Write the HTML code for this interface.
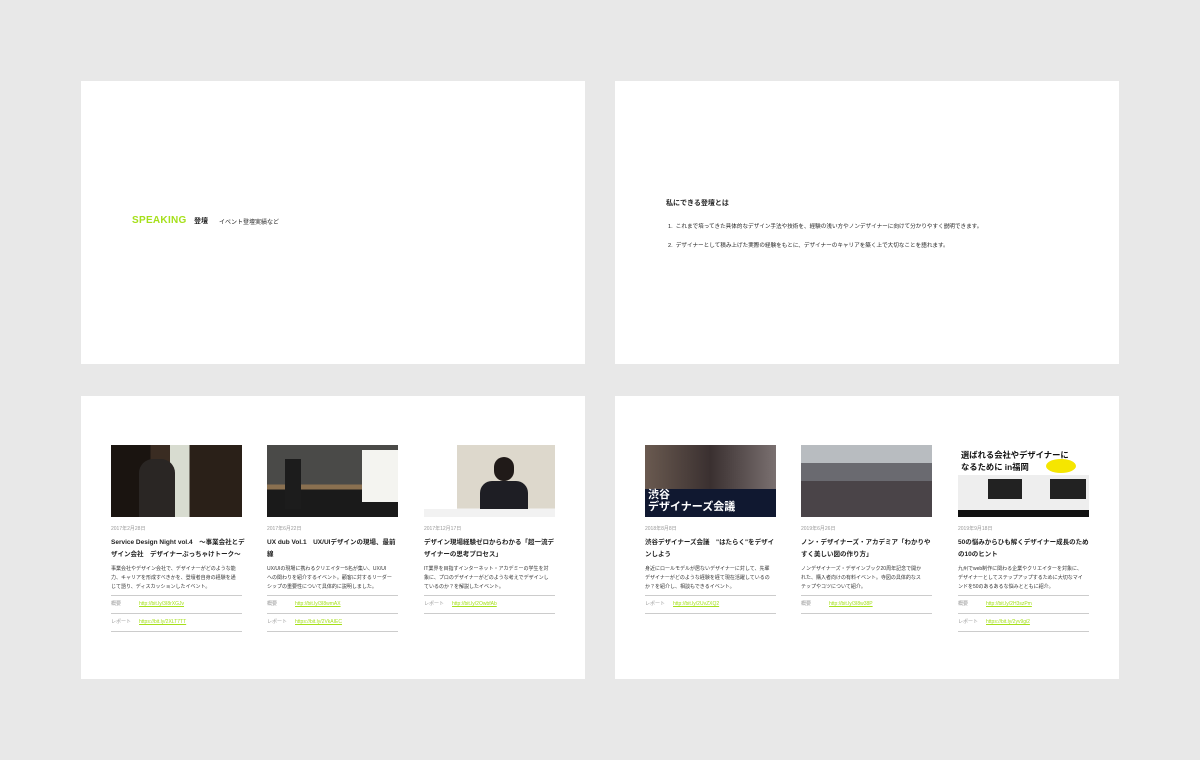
<!DOCTYPE html>
<html><head><meta charset="utf-8"><style>
*{margin:0;padding:0;box-sizing:border-box}
body{width:1200px;height:760px;background:#e8e8e8;position:relative;font-family:"Liberation Sans","Noto Sans CJK JP",sans-serif;color:#222;overflow:hidden}
.p{position:absolute;background:#fff;width:504px;height:283px}
.c{position:absolute;top:49px;width:131px}
.img{height:72px;width:131px;position:relative;overflow:hidden}
.d{margin-top:8px;font-size:5px;color:#999;height:8px}
.t{margin-top:4px;font-size:6.5px;font-weight:bold;line-height:12px;height:24px;color:#222;white-space:nowrap}
.ds{margin-top:4px;font-size:5px;line-height:9px;color:#333;height:27px;white-space:nowrap}
.rows{margin-top:3px;border-top:1px solid #ccc}
.r{height:18px;border-bottom:1px solid #ccc;font-size:5px;line-height:17px;color:#999;display:flex}
.r span:first-child{width:28px}
.r a{color:#a5e01a;text-decoration:underline}
</style></head><body>
<div class="p" style="left:81px;top:81px">
 <div style="position:absolute;left:51px;top:134px;font-size:10px;font-weight:bold;color:#a5e01a;letter-spacing:.3px">SPEAKING</div>
 <div style="position:absolute;left:113px;top:135px;font-size:7px;font-weight:bold">登壇</div>
 <div style="position:absolute;left:138px;top:136px;font-size:6px">イベント登壇実績など</div>
</div>
<div class="p" style="left:615px;top:81px">
 <div style="position:absolute;left:51px;top:117px;font-size:7px;font-weight:bold">私にできる登壇とは</div>
 <div style="position:absolute;left:53px;top:141px;font-size:5.6px">1.&nbsp; これまで培ってきた具体的なデザイン手法や技術を、経験の浅い方やノンデザイナーに向けて分かりやすく説明できます。</div>
 <div style="position:absolute;left:53px;top:160px;font-size:5.6px">2.&nbsp; デザイナーとして積み上げた実際の経験をもとに、デザイナーのキャリアを築く上で大切なことを語れます。</div>
</div>
<div class="p" style="left:81px;top:396px">
 <div class="c" style="left:30px">
  <div class="img" style="background:linear-gradient(90deg,#1a1410 0 30%,#3a2c22 30% 45%,#d8dcd0 45% 60%,#2a2018 60%)"><div style="position:absolute;left:28px;top:14px;width:36px;height:58px;background:#2a2624;border-radius:14px 14px 0 0"></div></div>
  <div class="d">2017年2月28日</div>
  <div class="t">Service Design Night vol.4　〜事業会社とデ<br>ザイン会社　デザイナーぶっちゃけトーク〜</div>
  <div class="ds">事業会社やデザイン会社で、デザイナーがどのような能<br>力、キャリアを形成すべきかを、登壇者自身の経験を通<br>じて語り、ディスカッションしたイベント。</div>
  <div class="rows"><div class="r"><span>概要</span><a>http://bit.ly/3I8rXGJv</a></div><div class="r"><span>レポート</span><a>https://bit.ly/2XLT7TT</a></div></div>
 </div>
 <div class="c" style="left:186px">
  <div class="img" style="background:linear-gradient(180deg,#4a4a48 0 55%,#8a7050 55% 62%,#1a1a1a 62%)"><div style="position:absolute;right:0;top:5px;width:36px;height:52px;background:#f4f4f0"></div><div style="position:absolute;left:18px;top:14px;width:16px;height:50px;background:#1c1c1c"></div></div>
  <div class="d">2017年6月22日</div>
  <div class="t">UX dub Vol.1　UX/UIデザインの現場、最前<br>線</div>
  <div class="ds">UX/UIの現場に携わるクリエイター5名が集い、UX/UI<br>への関わりを紹介するイベント。顧客に対するリーダー<br>シップの重要性について具体的に説明しました。</div>
  <div class="rows"><div class="r"><span>概要</span><a>http://bit.ly/3I8wmAX</a></div><div class="r"><span>レポート</span><a>https://bit.ly/2VkAIEC</a></div></div>
 </div>
 <div class="c" style="left:343px">
  <div class="img" style="background:linear-gradient(180deg,#ddd8cc 0 88%,#f2f2f2 88%)"><div style="position:absolute;left:0;top:0;width:33px;height:64px;background:#fff"></div><div style="position:absolute;left:56px;top:36px;width:48px;height:28px;background:#1e1e24;border-radius:12px 12px 0 0"></div><div style="position:absolute;left:70px;top:12px;width:20px;height:24px;background:#201a18;border-radius:10px"></div></div>
  <div class="d">2017年12月17日</div>
  <div class="t">デザイン現場経験ゼロからわかる「超一流デ<br>ザイナーの思考プロセス」</div>
  <div class="ds">IT業界を目指すインターネット・アカデミーの学生を対<br>象に、プロのデザイナーがどのような考えでデザインし<br>ているのか？を解説したイベント。</div>
  <div class="rows"><div class="r"><span>レポート</span><a>http://bit.ly/2OwbfAb</a></div></div>
 </div>
</div>
<div class="p" style="left:615px;top:396px">
 <div class="c" style="left:30px">
  <div class="img" style="background:linear-gradient(90deg,#6a5a50,#3a3030 50%,#7a7070)"><div style="position:absolute;left:0;bottom:0;width:131px;height:28px;background:#101830"></div><div style="position:absolute;left:3px;top:44px;color:#fff;font-size:11px;font-weight:bold;line-height:12px">渋谷<br>デザイナーズ会議</div></div>
  <div class="d">2018年8月8日</div>
  <div class="t">渋谷デザイナーズ会議　"はたらく"をデザイ<br>ンしよう</div>
  <div class="ds">身近にロールモデルが居ないデザイナーに対して、先輩<br>デザイナーがどのような経験を経て現在活躍しているの<br>か？を紹介し、相談もできるイベント。</div>
  <div class="rows"><div class="r"><span>レポート</span><a>http://bit.ly/2UvZXQ2</a></div></div>
 </div>
 <div class="c" style="left:186px">
  <div class="img" style="background:linear-gradient(180deg,#b8bcc0 0 25%,#6a6a70 25% 50%,#4a4448 50%)"></div>
  <div class="d">2019年6月26日</div>
  <div class="t">ノン・デザイナーズ・アカデミア「わかりや<br>すく美しい図の作り方」</div>
  <div class="ds">ノンデザイナーズ・デザインブック20周年記念で開か<br>れた、購入者向けの有料イベント。寺図の具体的なス<br>テップやコツについて紹介。</div>
  <div class="rows"><div class="r"><span>概要</span><a>http://bit.ly/3I8w38P</a></div></div>
 </div>
 <div class="c" style="left:343px">
  <div class="img" style="background:#fff"><div style="position:absolute;left:3px;top:4px;font-size:8.3px;font-weight:bold;line-height:12px;color:#111;white-space:nowrap">選ばれる会社やデザイナーに<br>なるために in福岡</div><div style="position:absolute;left:0;top:30px;width:131px;height:42px;background:#eee"></div><div style="position:absolute;left:30px;top:34px;width:34px;height:20px;background:#222"></div><div style="position:absolute;left:92px;top:34px;width:36px;height:20px;background:#222"></div><div style="position:absolute;left:0;bottom:0;width:131px;height:7px;background:#111"></div><div style="position:absolute;left:88px;top:14px;width:30px;height:14px;border-radius:50%;background:#f5e600"></div></div>
  <div class="d">2019年9月18日</div>
  <div class="t">50の悩みからひも解くデザイナー成長のため<br>の10のヒント</div>
  <div class="ds">九州でweb制作に関わる企業やクリエイターを対象に、<br>デザイナーとしてステップアップするために大切なマイ<br>ンドを50のあるあるな悩みとともに紹介。</div>
  <div class="rows"><div class="r"><span>概要</span><a>http://bit.ly/2H3szPm</a></div><div class="r"><span>レポート</span><a>https://bit.ly/2yv9gi2</a></div></div>
 </div>
</div>
</body></html>
